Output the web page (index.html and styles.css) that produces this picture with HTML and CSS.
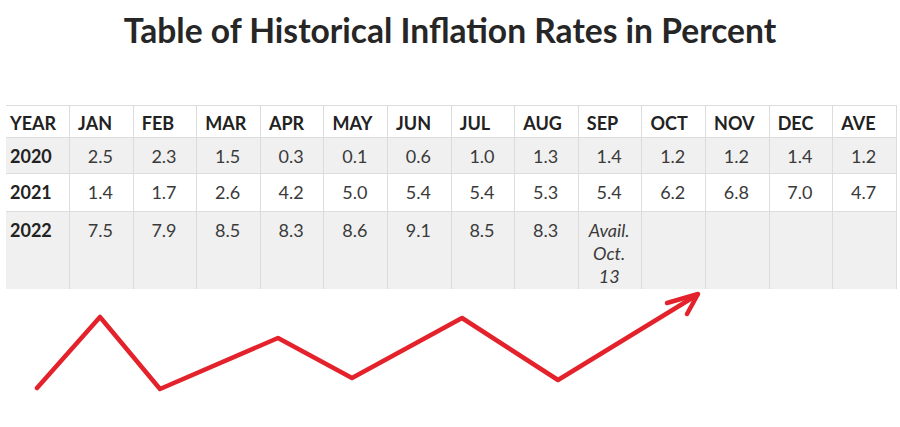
FILE: index.html
```html
<!DOCTYPE html>
<html>
<head>
<meta charset="utf-8">
<link rel="stylesheet" href="styles.css">
</head>
<body>
<h1 class="title">Table of Historical Inflation Rates in Percent</h1>
<table class="rates">
  <tr class="head">
    <th>YEAR</th><th>JAN</th><th>FEB</th><th>MAR</th><th>APR</th><th>MAY</th><th>JUN</th><th>JUL</th><th>AUG</th><th>SEP</th><th>OCT</th><th>NOV</th><th>DEC</th><th>AVE</th>
  </tr>
  <tr class="r2020 shade">
    <th>2020</th><td>2.5</td><td>2.3</td><td>1.5</td><td>0.3</td><td>0.1</td><td>0.6</td><td>1.0</td><td>1.3</td><td>1.4</td><td>1.2</td><td>1.2</td><td>1.4</td><td>1.2</td>
  </tr>
  <tr class="r2021">
    <th>2021</th><td>1.4</td><td>1.7</td><td>2.6</td><td>4.2</td><td>5.0</td><td>5.4</td><td>5.4</td><td>5.3</td><td>5.4</td><td>6.2</td><td>6.8</td><td>7.0</td><td>4.7</td>
  </tr>
  <tr class="r2022 shade">
    <th>2022</th><td>7.5</td><td>7.9</td><td>8.5</td><td>8.3</td><td>8.6</td><td>9.1</td><td>8.5</td><td>8.3</td><td class="avail">Avail.<br>Oct.<br>13</td><td></td><td></td><td></td><td></td>
  </tr>
</table>
<svg class="trend" width="900" height="139" viewBox="0 288 900 139" xmlns="http://www.w3.org/2000/svg">
  <polyline points="37,387 100,316 160,388 278,337 352,377 462,317 558,379 697,294" fill="none" stroke="#e3222b" stroke-width="4.5" stroke-linejoin="round" stroke-linecap="round"/>
  <polyline points="667,302 698,293 687,313" fill="none" stroke="#e3222b" stroke-width="4.5" stroke-linejoin="round" stroke-linecap="round"/>
</svg>
</body>
</html>
```
FILE: styles.css
```css
html, body {
  margin: 0;
  padding: 0;
  background: #ffffff;
}
body {
  width: 900px;
  height: 427px;
  overflow: hidden;
  font-family: Lato, "Open Sans", sans-serif;
}
.title {
  margin: 10px 0 0;
  height: 95px;
  font-size: 33.6px;
  line-height: 40px;
  font-weight: 700;
  color: #262626;
  text-align: center;
  letter-spacing: 0;
}
.rates {
  margin-left: 6px;
  width: 891px;
  border-collapse: collapse;
  table-layout: fixed;
  font-size: 18px;
  line-height: 23px;
  color: #3a3a3a;
}
.rates th,
.rates td {
  padding: 7px 8px 0 8px;
  vertical-align: top;
  border-right: 1px solid #dcdcdc;
  border-top: 1px solid #dcdcdc;
  box-sizing: border-box;
}
.rates th {
  text-align: left;
  font-weight: 700;
  color: #222222;
}
.rates td {
  text-align: center;
  padding-left: 6px;
}
.rates tr > th:first-child {
  padding-left: 4px;
}
.rates .head th {
  padding-top: 6px;
}
.rates .head {
  height: 32px;
}
.rates .r2020 {
  height: 36px;
}
.rates .r2021 {
  height: 38px;
}
.rates .r2022 {
  height: 77px;
}
.rates .shade {
  background: #f0f0f0;
}
.rates .avail {
  font-style: italic;
}
.trend {
  display: block;
}
```
